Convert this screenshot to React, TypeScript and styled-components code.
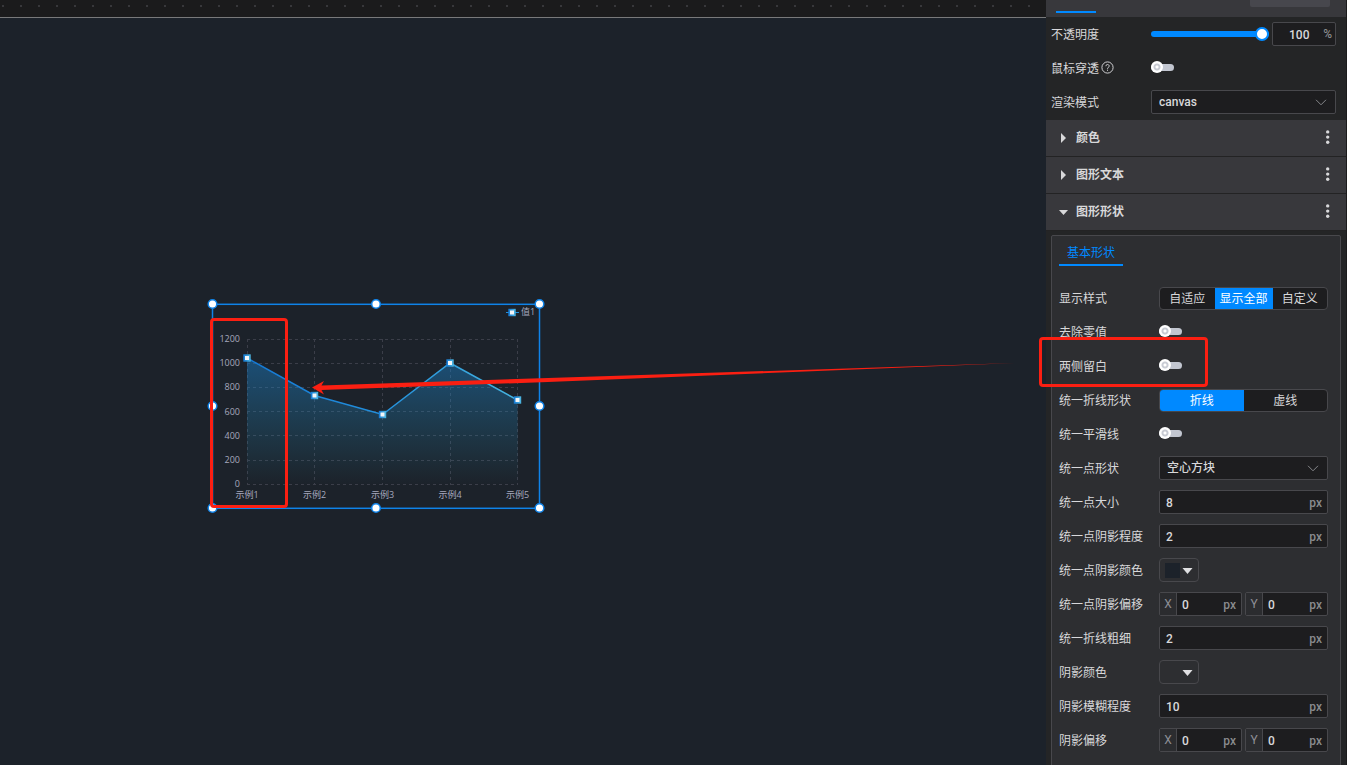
import React, { useId, useState } from 'react';
import styled, { createGlobalStyle, css } from 'styled-components';

const GlobalStyle = createGlobalStyle`
  *, *::before, *::after { box-sizing: border-box; }
  body {
    margin: 0;
    background: #1c222a;
    color: #d8d8da;
    font: 12px/16px Roboto, "Noto Sans CJK SC", sans-serif;
  }
  button, input, select { font: inherit; color: inherit; }
`;

const Editor = styled.div`
  display: flex;
  height: 100vh;
  overflow: hidden;
`;

const Workspace = styled.main`
  flex: 1;
  min-width: 0;
  display: flex;
  flex-direction: column;
`;

const DotStrip = styled.div`
  flex: none;
  height: 18px;
  border-bottom: 1px solid #78797a;
  background-color: #1b1b1c;
  background-image: linear-gradient(#1b1b1c 5px, transparent 5px 7px, #1b1b1c 7px),
    linear-gradient(90deg, transparent 2px, #38383b 2px 4px, transparent 4px);
  background-size: 18px 18px;
`;

const Stage = styled.div`
  position: relative;
  flex: 1;
  background: #1c222a;
`;

const ChartWidget = styled.svg`
  position: absolute;
  left: 205px;
  top: 279px;
  overflow: visible;
`;

const Arrow = styled.svg`
  position: absolute;
  left: 312px;
  top: 343px;
`;

const ChartText = styled.text`
  font: 9px "Open Sans", "Noto Sans CJK SC", sans-serif;
  fill: #a6a8bd;
`;

const Callout = styled.span`
  position: absolute;
  border: 3px solid #fb1f12;
  border-radius: 4px;
  pointer-events: none;
`;

const ChartCallout = styled(Callout)`
  left: 210px;
  top: 300px;
  width: 78px;
  height: 190px;
`;

const RowCallout = styled(Callout)`
  left: -20px;
  top: -17px;
  width: 169px;
  height: 50px;
`;

const Panel = styled.aside`
  flex: none;
  width: 301px;
  display: flex;
  flex-direction: column;
  background: #242526;
  border-right: 1px solid #1b1b1c;
`;

const TabBar = styled.div`
  flex: none;
  display: flex;
  justify-content: space-between;
  height: 17px;
  padding: 0 16px 0 10px;
  background: #38383c;
`;

const ActiveTab = styled.span`
  width: 40px;
  height: 13px;
  border-bottom: 2px solid #0089ff;
`;

const TabAction = styled.span`
  width: 80px;
  height: 7px;
  border-radius: 0 0 2px 2px;
  background: #47474d;
`;

const Fields = styled.div`
  flex: none;
  display: flex;
  flex-direction: column;
  gap: 10px;
`;

const TopFields = styled(Fields)`
  padding: 5px 10px 6px 5px;
`;

const FieldRow = styled.div`
  position: relative;
  display: flex;
  align-items: center;
  height: 24px;
`;

const FieldLabel = styled.label`
  display: flex;
  align-items: center;
  gap: 2px;
  width: 100px;
  flex: none;
  padding-top: 1px;
  white-space: nowrap;
  svg { margin-bottom: 3px; }
`;

const Control = styled.div`
  flex: 1;
  min-width: 0;
  display: flex;
  align-items: center;
  gap: 3px;
`;

const Slider = styled.input`
  appearance: none;
  flex: 1;
  min-width: 0;
  height: 14px;
  margin: 0;
  background: none;
  &::-webkit-slider-runnable-track {
    height: 6px;
    border-radius: 3px;
    background: #0089ff;
  }
  &::-webkit-slider-thumb {
    appearance: none;
    width: 14px;
    height: 14px;
    margin-top: -4px;
    border: 2px solid #0089ff;
    border-radius: 50%;
    background: #fff;
  }
`;

const InputFrame = styled.div<{ $width?: number }>`
  ${(p) => (p.$width ? css`flex: none; width: ${p.$width}px;` : css`flex: 1;`)}
  min-width: 0;
  display: flex;
  align-items: center;
  height: 24px;
  border: 1px solid #48484c;
  border-radius: 2px;
  background: #1d1d1f;
`;

const AxisTag = styled.label`
  flex: none;
  width: 17px;
  line-height: 22px;
  text-align: center;
  color: #8e8f96;
  border-right: 1px solid #48484c;
  background: #2b2c2f;
`;

const TextInput = styled.input<{ $axis?: boolean; $center?: boolean }>`
  flex: 1;
  width: 0;
  min-width: 0;
  height: 22px;
  padding: 2px 0 0 ${(p) => (p.$axis ? 5 : p.$center ? 16 : 6)}px;
  border: 0;
  outline: 0;
  background: none;
  font-weight: 500;
`;

const Unit = styled.span`
  padding: 2px 5px 0 0;
  color: #8a8b8e;
  font-weight: 500;
`;

const PercentUnit = styled(Unit)`
  padding: 0 3px 0 0;
`;

const SelectFrame = styled.div`
  position: relative;
  flex: 1;
  min-width: 0;
  svg {
    position: absolute;
    right: 9px;
    top: 9px;
    pointer-events: none;
  }
`;

const Select = styled.select`
  appearance: none;
  display: block;
  width: 100%;
  height: 24px;
  padding: 0 24px 0 7px;
  border: 1px solid #48484c;
  border-radius: 2px;
  background: #1d1d1f;
  font-weight: 500;
`;

const Switch = styled.input`
  appearance: none;
  position: relative;
  width: 23px;
  height: 12px;
  margin: 0 0 2px;
  &::before {
    content: "";
    position: absolute;
    left: 0;
    top: 3px;
    width: 23px;
    height: 7px;
    border-radius: 4px;
    background: #c2c6d0;
  }
  &::after {
    content: "";
    position: absolute;
    left: 0;
    top: 0;
    width: 12px;
    height: 12px;
    border-radius: 50%;
    background: radial-gradient(circle, #fff 1px, #c9ccd4 2px 3px, #fff 4px);
  }
  &:checked::after { left: 11px; }
`;

const SectionHeader = styled.header`
  flex: none;
  display: flex;
  align-items: center;
  height: 37px;
  padding: 0 13px;
  border-bottom: 1px solid #232324;
  background: #38383c;
`;

const SectionToggle = styled.button`
  flex: 1;
  display: flex;
  align-items: center;
  gap: 8px;
  padding: 0;
  border: 0;
  background: none;
  font-weight: 700;
`;

const MoreButton = styled.button`
  display: flex;
  padding: 0;
  border: 0;
  background: none;
`;

const ShapeBox = styled.section`
  flex: none;
  margin: 4px 5px 0;
  padding: 8px 12px 24px 7px;
  border: 1px solid #48484c;
  border-radius: 2px;
  background: #2d2e31;
`;

const BoxTab = styled.button`
  display: block;
  width: 64px;
  height: 22px;
  margin-bottom: 20px;
  padding: 0 0 2px;
  border: 0;
  border-bottom: 2px solid #0089ff;
  background: none;
  color: #0089ff;
`;

const Segments = styled.div`
  flex: 1;
  display: flex;
  height: 23px;
  border: 1px solid #48484c;
  border-radius: 4px;
  overflow: hidden;
  background: #1d1d1f;
`;

const Segment = styled.button<{ $active: boolean }>`
  flex: 1;
  padding: 1px 5px 0;
  border: 0;
  white-space: nowrap;
  background: ${(p) => (p.$active ? '#0089ff' : 'transparent')};
  color: ${(p) => (p.$active ? '#fff' : '#d8d8da')};
`;

const ColorButton = styled.button`
  display: flex;
  align-items: center;
  justify-content: space-between;
  width: 40px;
  height: 24px;
  padding: 0 5px;
  border: 1px solid #48484c;
  border-radius: 4px;
  background: #2d2e31;
`;

const Swatch = styled.span<{ $color: string }>`
  width: 15px;
  height: 15px;
  background: ${(p) => p.$color};
`;

const Chevron = () => (
  <svg width="12" height="7" viewBox="0 0 12 7" fill="none" stroke="#85868a" aria-hidden="true">
    <path d="M1 .8 6 5.8 11 .8" />
  </svg>
);

const Caret = ({ open }: { open: boolean }) => (
  <svg width="9" height="10" viewBox="0 0 9 10" fill="#d8d8da" aria-hidden="true">
    <path d={open ? 'M0 3h9L4.5 8z' : 'M2 0 7 5 2 10z'} />
  </svg>
);

const HelpIcon = () => (
  <svg width="13" height="13" viewBox="0 0 13 13" fill="none" stroke="#d0d0d3" aria-hidden="true">
    <circle cx="6.500" cy="6.500" r="5.600" />
    <path d="M4.900 5.200c0-2.300 3.300-2.200 3.300-.1 0 1.200-1.700 1.300-1.700 2.700M6.500 8.700v1.100" />
  </svg>
);

type RowProps = { label: string; help?: boolean; id?: string; children: React.ReactNode };

const Row = ({ label, help, id, children }: RowProps) => (
  <FieldRow>
    <FieldLabel htmlFor={id}>
      {label}
      {help && <HelpIcon />}
    </FieldLabel>
    <Control>{children}</Control>
  </FieldRow>
);

const SwitchRow = ({ label, help, marked }: { label: string; help?: boolean; marked?: boolean }) => {
  const id = useId();
  return (
    <Row label={label} help={help} id={id}>
      <Switch id={id} type="checkbox" role="switch" />
      {marked && <RowCallout />}
    </Row>
  );
};

const SelectRow = ({ label, options }: { label: string; options: string[] }) => {
  const id = useId();
  return (
    <Row label={label} id={id}>
      <SelectFrame>
        <Select id={id}>
          {options.map((o) => (
            <option key={o}>{o}</option>
          ))}
        </Select>
        <Chevron />
      </SelectFrame>
    </Row>
  );
};

const PixelRow = ({ label, value }: { label: string; value: string }) => {
  const id = useId();
  return (
    <Row label={label} id={id}>
      <InputFrame>
        <TextInput id={id} defaultValue={value} />
        <Unit>px</Unit>
      </InputFrame>
    </Row>
  );
};

const OffsetRow = ({ label }: { label: string }) => {
  const id = useId();
  return (
    <Row label={label} id={`${id}X`}>
      {['X', 'Y'].map((axis) => (
        <InputFrame key={axis}>
          <AxisTag htmlFor={id + axis}>{axis}</AxisTag>
          <TextInput id={id + axis} $axis defaultValue="0" />
          <Unit>px</Unit>
        </InputFrame>
      ))}
    </Row>
  );
};

const SegmentRow = ({ label, options, initial }: { label: string; options: string[]; initial: number }) => {
  const [active, setActive] = useState(initial);
  return (
    <Row label={label}>
      <Segments role="group" aria-label={label}>
        {options.map((o, i) => (
          <Segment key={o} $active={i === active} onClick={() => setActive(i)}>
            {o}
          </Segment>
        ))}
      </Segments>
    </Row>
  );
};

const ColorRow = ({ label, color }: { label: string; color: string }) => {
  const id = useId();
  return (
    <Row label={label} id={id}>
      <ColorButton id={id}>
        <Swatch $color={color} />
        <svg width="11" height="7" viewBox="0 0 11 7" fill="#e0e0e2" aria-hidden="true">
          <path d="M.5 1h10L5.500 7z" />
        </svg>
      </ColorButton>
    </Row>
  );
};

const Section = ({ title, open = false }: { title: string; open?: boolean }) => (
  <SectionHeader>
    <SectionToggle aria-expanded={open}>
      <Caret open={open} />
      {title}
    </SectionToggle>
    <MoreButton aria-label={`${title} 更多`}>
      <svg width="10" height="16" viewBox="0 0 10 16" fill="#d8d8da" aria-hidden="true">
        <circle cx="4.700" cy="1.900" r="1.700" />
        <circle cx="4.700" cy="7.100" r="1.700" />
        <circle cx="4.700" cy="12.300" r="1.700" />
      </svg>
    </MoreButton>
  </SectionHeader>
);

const points = [
  [42, 61],
  [109.5, 98.5],
  [177.5, 117.5],
  [245, 66],
  [312.5, 103],
];
const linePath = points.map(([x, y]) => `${x},${y}`).join(' ');
const handles = [
  [7.5, 7], [171, 7], [334.5, 7],
  [7.5, 109], [334.5, 109],
  [7.5, 211], [171, 211], [334.5, 211],
];

const LineChart = () => (
  <ChartWidget width="342" height="218" viewBox="0 0 342 218" role="img" aria-label="值1">
    <defs>
      <linearGradient id="area" x1="0" y1="61" x2="0" y2="188" gradientUnits="userSpaceOnUse">
        <stop offset="0" stopColor="#1a85d6" stopOpacity=".45" />
        <stop offset="1" stopColor="#2a9bc0" stopOpacity="0" />
      </linearGradient>
      <linearGradient id="stroke" x1="42" y1="0" x2="313" y2="0" gradientUnits="userSpaceOnUse">
        <stop offset="0" stopColor="#1478d4" />
        <stop offset=".5" stopColor="#2390dc" />
        <stop offset="1" stopColor="#45b4e0" />
      </linearGradient>
      <linearGradient id="marker" x1="0" y1="0" x2="1" y2="0">
        <stop offset="0" stopColor="#1478d4" />
        <stop offset="1" stopColor="#4fb9e2" />
      </linearGradient>
    </defs>
    <g stroke="#3b3e49" strokeDasharray="3 3" shapeRendering="crispEdges">
      {[0, 1, 2, 3, 4, 5, 6].map((i) => (
        <line key={i} x1="42" x2="313" y1={Math.floor(42 + i * 24.2) + 0.5} y2={Math.floor(42 + i * 24.2) + 0.5} />
      ))}
      {points.map(([x]) => (
        <line key={x} x1={Math.floor(x) + 0.5} x2={Math.floor(x) + 0.5} y1="42" y2="188" />
      ))}
    </g>
    <polygon points={`42,188 ${linePath} 313,188`} fill="url(#area)" />
    <polyline points={linePath} fill="none" stroke="url(#stroke)" strokeWidth="1.500" />
    {points.map(([x, y]) => (
      <g key={x}>
        <rect x={x - 3.7} y={y - 3.7} width="7.400" height="7.400" fill="url(#marker)" />
        <rect x={x - 2} y={y - 2} width="4" height="4" fill="#f4f6f8" />
      </g>
    ))}
    <line x1="301" x2="314" y1="15.500" y2="15.500" stroke="#2390dc" />
    <rect x="303.300" y="11.800" width="7.400" height="7.400" fill="url(#marker)" />
    <rect x="305" y="13.500" width="4" height="4" fill="#f4f6f8" />
    <ChartText x="316" y="18">值1</ChartText>
    {[1200, 1000, 800, 600, 400, 200, 0].map((v, i) => (
      <ChartText key={v} x="35" y={Math.round(45 + i * 24.2)} textAnchor="end">
        {v}
      </ChartText>
    ))}
    {points.map(([x], i) => (
      <ChartText key={x} x={x} y="201" textAnchor="middle">
        {`示例${i + 1}`}
      </ChartText>
    ))}
    <rect x="7.500" y="7.300" width="327" height="204" fill="none" stroke="#0f83e8" strokeWidth="1.500" />
    {handles.map(([x, y]) => (
      <circle key={`${x}-${y}`} cx={x} cy={y} r="4.300" fill="#fff" stroke="#0f83e8" strokeWidth="1.500" />
    ))}
  </ChartWidget>
);

export default function App() {
  const opacityId = useId();
  return (
    <Editor>
      <GlobalStyle />
      <Workspace>
        <DotStrip />
        <Stage>
          <LineChart />
          <ChartCallout />
          <Arrow width="710" height="36" viewBox="0 0 710 36" fill="#fb1f12" aria-hidden="true">
            <path d="M0 26.500 12 20 9.500 24.500 236 17 703 2 236 21 9.500 29 12 33.500z" />
          </Arrow>
        </Stage>
      </Workspace>
      <Panel>
        <TabBar>
          <ActiveTab />
          <TabAction />
        </TabBar>
        <TopFields>
          <Row label="不透明度" id={opacityId}>
            <Slider id={opacityId} type="range" defaultValue={100} />
            <InputFrame $width={64}>
              <TextInput $center aria-label="不透明度百分比" defaultValue="100" />
              <PercentUnit>%</PercentUnit>
            </InputFrame>
          </Row>
          <SwitchRow label="鼠标穿透" help />
          <SelectRow label="渲染模式" options={['canvas', 'svg']} />
        </TopFields>
        <Section title="颜色" />
        <Section title="图形文本" />
        <Section title="图形形状" open />
        <ShapeBox>
          <BoxTab>基本形状</BoxTab>
          <Fields>
            <SegmentRow label="显示样式" options={['自适应', '显示全部', '自定义']} initial={1} />
            <SwitchRow label="去除零值" />
            <SwitchRow label="两侧留白" marked />
            <SegmentRow label="统一折线形状" options={['折线', '虚线']} initial={0} />
            <SwitchRow label="统一平滑线" />
            <SelectRow label="统一点形状" options={['空心方块', '空心圆', '实心圆']} />
            <PixelRow label="统一点大小" value="8" />
            <PixelRow label="统一点阴影程度" value="2" />
            <ColorRow label="统一点阴影颜色" color="#1c222a" />
            <OffsetRow label="统一点阴影偏移" />
            <PixelRow label="统一折线粗细" value="2" />
            <ColorRow label="阴影颜色" color="transparent" />
            <PixelRow label="阴影模糊程度" value="10" />
            <OffsetRow label="阴影偏移" />
          </Fields>
        </ShapeBox>
      </Panel>
    </Editor>
  );
}
